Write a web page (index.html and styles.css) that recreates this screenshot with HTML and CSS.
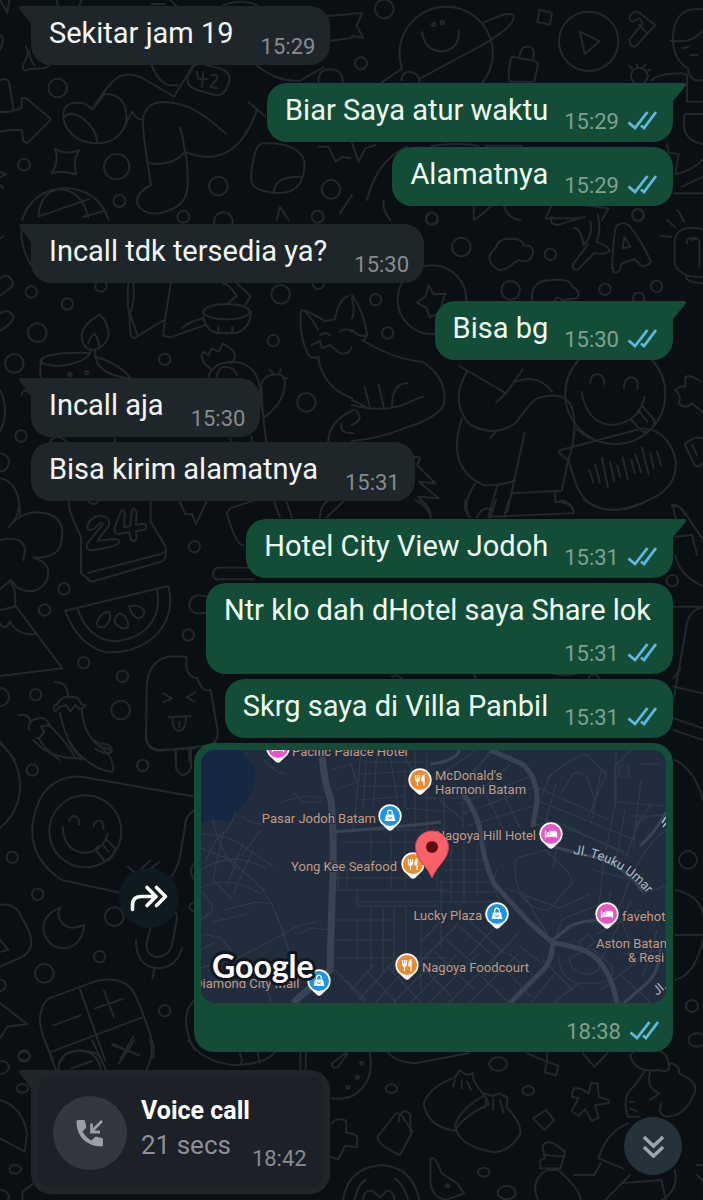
FILE: index.html
```html
<!DOCTYPE html>
<html lang="id">
<head>
<meta charset="utf-8">
<meta name="viewport" content="width=device-width, initial-scale=1">
<title>Chat</title>
<link rel="stylesheet" href="styles.css">
</head>
<body>
<svg width="0" height="0" class="defs" aria-hidden="true">
  <defs>
    <symbol id="ticks" viewBox="0 0 30 20"><path d="M1.500 12.500l6.500 5.500L20.500 2M14 15.500l3 2.500L29 2" fill="none" stroke="#5fb9df" stroke-width="2.800"/></symbol>
    <g id="pin"><path d="M0-11.800a11.800 11.800 0 0 1 6.500 21.600L2 14Q0 15.500-2 14l-4.500-4.200A11.800 11.800 0 0 1 0-11.800z" fill="#fff"/><circle r="10"/></g>
    <g id="food"><use href="#pin" fill="#ec8a33"/><path d="M-4.500-5v4q0 2 2 2v5M-2.500-5v5M-.5-5v4q0 2-2 2M4-5v11M4-5q-2.500 1-2 6h2z" fill="#fff" stroke="#fff" stroke-width="1.200"/></g>
    <g id="shop"><use href="#pin" fill="#1c94e6"/><path d="M-4-1.500h8l1.300 6.500h-10.600z" fill="#fff"/><path d="M-2.300-1.500v-2a2.300 2.300 0 0 1 4.600 0v2" fill="none" stroke="#fff" stroke-width="1.300"/><path d="M-2 1.500q2 2 4 0" fill="none" stroke="#1c94e6"/></g>
    <g id="bed"><use href="#pin" fill="#e855c4"/><path d="M-5.500-3.500v7.500M-5.500 2h11M5.500 4v-4.500q0-2-2-2h-4v4.500" fill="none" stroke="#fff" stroke-width="1.300"/><path d="M-.5-2.500h4q2 0 2 2v2.500h-6z" fill="#fff"/><circle cx="-2.800" cy="-.5" r="1.500" fill="#fff"/></g>
  </defs>
</svg>
<div class="screen">
  <svg class="wallpaper" viewBox="0 0 703 1200" preserveAspectRatio="xMidYMin slice" aria-hidden="true">
    <g transform="scale(.33333)">
      <path d="M0 0L22 38L28 0M170 0l10 48M245 0l-20 48M0 105Q18 110 0 150M78 140q12 25-10 55 0 25 18 12 20 0 40-2 30-5 20-20M88 150q0 30 15 45M0 240q25-8 28 12l12 75M0 335q30 5 65-12v-28q12-5 20 5l64 54q5 8-5 14l-58 58q-10 5-16-5l-4-30q-35-5-66 4"/>
      <path d="M277 328q-20-20-40-20-60-2-44 60 25 60 95 62 65 2 90-60 5-50-15-70-15-18-48-18zM193 350q20-20 55 5 45 35 43 75M277 328q45-75 80-98 40-15 80 10l85 50 60-100M455 196q20 50 52 60l25 0M378 370l18-35q12 25 35 24M428 360q8-50 55-53 40-2 85 15 45 20 108 78M428 360q0 40 25 195-50 25-40 60 30 40 90 18 60-20 60-80 2-60-10-110-5-40-14-60M445 488q65 15 112-32 150 60 215-130M745 306l50 42M770 196q60 50 130 46l70-40M955 246q0-40 35-38 40 0 38 40"/>
      <path d="M580 200q10-12 30-8l55 15q30 12 22 40l-8 20q-12 22-35 18l-60-18q-25-10-22-35zM590 215l5 22 28 0M610 215l-4 45M635 225q20-5 15 15l-20 20 22 5"/>
      <path d="M165 446q30 20 72 5-20 35-8 72-38-12-74-4 24-35 10-73zM66 660q30-90 130-96 100 5 130 96M115 650q5-70 60-82 70 0 90 85M115 650l150-52M250 650l65-18M0 515l18 8-18 8M0 555l10 10"/>
      <path d="M788 430q90-5 120 40 15 30-8 80-25 35-80 28-55-5-65-30-5-30 10-90 8-25 23-28zM822 578q0-50 80-48M955 440l30 0 22 45 20-15 25 5M830 660l10-40 26 40M1020 640l36-55"/>
      <circle cx="173" cy="264" r="28"/><circle cx="72" cy="494" r="18"/><circle cx="350" cy="500" r="38"/><circle cx="358" cy="603" r="18"/><circle cx="655" cy="558" r="28"/><circle cx="993" cy="568" r="28"/><circle cx="550" cy="650" r="18"/><circle cx="670" cy="665" r="28"/><circle cx="953" cy="650" r="18"/><path d="M455 12l40 0M510 0l20 18M670 15q60-20 100 0M985 48l70-6M990 122l66-8"/>
    </g>
    <g transform="translate(352) scale(.33333)">
      <circle cx="97" cy="27" r="28"/><circle cx="27" cy="190" r="18"/><circle cx="710" cy="124" r="89"/><path d="M683 94l60 30-45 38zM150 205a140 140 0 1 1 240 45M210 96q8 58 62 58 52-8 48-62M390 70q85-40 94-24 10 30-95 90L205 235M150 205L85 250M148 240q5-30 30-24 25 5 25 32M0 40l30 0-16 38 20 35-34-6M562 30l38 8-6 36-38-8zM480 170l65 12q15 5 12 15l-10 48h-72q-10-10 0-62zM502 172q5-38 32-32 18 10 8 42M835 45q20-20 35 0l40 30-60 65q-18 0-18-20l40-50-10-15-20 10q-15-5-7-20zM862 75l22 22"/>
      <circle cx="245" cy="73" r="5"/><circle cx="271" cy="68" r="5"/><circle cx="862" cy="228" r="25"/><path d="M840 205l-8-6M855 200v-8M875 200l6-8M888 212l8-4M900 240q20-20 90-20l15 5v80h48M1053 28q-90-10-90 90 0 60 45 88M955 122q70 10 98-32M990 145l20-5M1015 165l20 0M1053 240q-40 10-45-35M1053 342l-55 0q-15 80 55 90M945 430l5 28 30 5-10 60q50-10 83-45M965 580h88M990 560l63-30M0 430l20 55 20-40 30-10M45 600q30-120 120-160M95 600q-5 30 20 60M365 615v45q20-10 55-45M455 615q10 40 50 45M240 437q80-10 140 0M400 437h110M600 615l-20 40h100M690 615l80 10-20 35M975 630q15 15 15 30"/><circle cx="240" cy="657" r="18"/><circle cx="858" cy="645" r="18"/>
    </g>
    <g transform="translate(0 215) scale(.33333)">
      <path d="M65 30q-8 90 60 160M0 70l10-5M0 190q20-18 36 5 8 16-8 26l-28 22M0 295q25-16 40 8 5 18-40 44M385 205q-5 50 3 95l4 60q8 15 18 5l85-52 18-110M400 205q5 60-10 90l22 65M495 313q-5 35-5 50l20 4 110-38M545 340q20-20 65-30M610 290q-2 50 40 64h60q45-20 42-65M670 205q20 5 40 38l-30 25M710 205l42 38-15 25M655 335v15M697 335v15"/><ellipse cx="680" cy="290" rx="69" ry="23"/>
      <path d="M300 298q-60 35-55 72 4 28 28 35h10q40-15 43-45 0-35-26-62zM265 385q5-22 20-28 15 25 12 45M273 405q-10 40-100 48-70-5-45-25 40-18 135-14M128 430q-12 20-5 60M285 405q-5 75 108 85-35-45-108-65"/>
      <circle cx="260" cy="473" r="5"/><circle cx="210" cy="479" r="5"/><circle cx="112" cy="353" r="28"/><circle cx="94" cy="231" r="17"/><circle cx="202" cy="267" r="17"/><circle cx="43" cy="445" r="28"/><circle cx="303" cy="213" r="17"/><circle cx="842" cy="238" r="28"/><circle cx="820" cy="377" r="17"/><circle cx="494" cy="433" r="17"/><circle cx="63" cy="663" r="17"/><circle cx="919" cy="562" r="28"/><circle cx="955" cy="205" r="17"/><circle cx="0" cy="742" r="27"/>
      <path d="M630 460q-35-25-20-50l15 10 10-20 22 10 10-25q60 30 25 60M625 485q15-45 75-45 70 5 80 80M650 485q5-25 20-30M710 480q-5-25-40-25M790 600q-25-90 10-115 50-20 55 15 0 60-60 105M785 520q0 60 14 160M755 665v20M808 465l12 10M842 462l-4 12M862 490l-12 2M925 420q-30-60-22-130 0-15 72 28l30-5q10-60 40-70M915 290q20 20 40 55M960 360q20-10 30 0M1020 350q20-15 35 0M935 390l25-12 5 22 25-10 30 25q30 5 35-20M925 420q20 15 30 5 5 45 30 75 20 30 72 50M985 680q0-60 75-95M1025 625q-10 30 35 30M0 525q30 60 0 125M0 790q60 10 60 110M65 540q5-20 18-10M150 680q20-30 50 0M345 670v10M690 670l10 20"/>
    </g>
    <g transform="translate(352 215) scale(.33333)">
      <circle cx="328" cy="96" r="28"/><circle cx="595" cy="118" r="17"/><circle cx="476" cy="226" r="28"/><circle cx="759" cy="223" r="17"/><circle cx="914" cy="214" r="17"/><circle cx="71" cy="254" r="17"/><circle cx="107" cy="354" r="17"/><circle cx="239" cy="10" r="17"/><circle cx="858" cy="0" r="17"/><circle cx="860" cy="250" r="17"/><circle cx="240" cy="254" r="103"/>
      <path d="M230 210l15 28 35-2-12 35 15 20-25 5-25 10-10-28-28-15 25-18zM440 165q-50-30-10-65 10-30 40-28 40-5 45 20 30-5 28 25-10 30-40 18-15 5-20 12-20 20-43 18zM540 255q-5-60 60-60 60-5 60 20 30 15 15 35l-45 5q-15-15-20 0M665 40q20-5 30 50 30-30 20-70M600 5q-10 25 20 24l80-25M738 0q10 50-5 80 40 15 40 28-20 15-45 5l-50 50q-20 5-15-15l45-60M785 160q-8 15 10 12 12-5 12-25l40-15 20 20q15 5 30-10-25-60-65-110-20-15-38 0-10 20-14 128M812 100l5-35 18 30zM945 15l25 22M985 0l12 20M925 62l32 3M1053 42q-80-15-85 35v70q15 40 85 40M1003 185q-5 15 50 20M1020 75q20-10 22 5v75M1005 85q-5-20 30-15"/>
      <path d="M322 453l140 82 50-72M462 535l-30 28M345 470q-55 90 10 160 80 40 140-10 40-60 60-70 100-30 110 50 10 60-20 150l-15 75M490 500q70-25 110 30M415 668l20-22M330 610q-50 150 65 200 50 5 95-15M518 652l-52 240M480 835l145-8M370 805q-40 60-20 90M435 815l-25 85M610 830v30q50 0 55 30M670 640l45 32M0 630q40-20 10-45M30 375q100 60 180 65 80 50 65 130-20 40-120 70-70 30-155 38M0 345q25 25 45 15-5-60-45-120M45 360l-10 20M0 570q90 25 165-5 40-20 50-20M120 575q0-70 45-70M80 510l15 65M38 515l15 60M0 555l40 20M175 730q20-10 30 0l-10 20 55 55-50-5 60 50-60-5M200 850q40 30 35 50M0 250q10 40 0 60"/>
      <path d="M900 435a150 150 0 1 1-220 0M688 530q20 100 95 100 80-10 95-85M715 505q0-28 22-28 22 5 20 30M816 520q0-34 25-33 20 5 15 35M870 572l38 45q-5 35-35 34l-38-38M858 585l28 35M627 705l245-65q75 5 98 90 10 70-50 110-80 45-150 45-70-10-95-70l-27-80-25-20q-5-8 4-10zM712 765l12 38M730 750l14 55M750 728l18 90M774 740l13 60M795 752l10 33M812 727l15 65M838 735l10 38M850 718l18 55M870 698l20 80M895 715l10 45M915 710l12 40M970 525q15-15 30-10v-30q20-5 45 15M970 525q20 20 10 40 20 20 40 0l33 28M1053 670q-25-10-55 18l30 62q10 10 25-5M1020 690l15 30M960 870q20-5 40 30"/>
    </g>
    <g transform="translate(0 500) scale(.33333)">
      <path d="M55 0q10 40-30 82 50-60 120-40 60 20 35 100-20 35-80 30 60 20 40 70-30 50-90 20-20-30-20-20l-30 25M0 120q70-15 75 30l-5 30M30 245q20 20 15 75l-45 10M45 315l142 190-187 23M0 370q5 15 20 10l10-15q20 40 75 38M208 0q-10 20 35 110v110l20 15q5 12 20 8l200-58q15-5 14-25v-20l-45-75V0M265 218l215-55 15-8"/>
      <path d="M262 85q0-30 35-38 35 0 30 30l-35 45 48-5q20 0 18 12-15 12-80 22-25 0-15-22l45-55q0-15-25 12-20 8-21-1zM362 35q10-12 12 5l-2 42 18-3 5-45q8-15 15 3l-2 37 25-3q12 8 0 18l-25 5 2 20q-5 15-18 5l-4-22-32 5q-15-2-12-18z"/>
      <path d="M195 332l310-74q20 80-30 140-60 65-160 58-80-20-120-124zM232 326q30 90 110 98 80-5 115-60 25-40 14-95M290 370q10-35 38-35 10 25-15 46-18 5-23-11zM345 370q-5-20 15-30 25 10 25 40-15 15-40-10zM388 318q35-5 45 15 0 20-20 22-20-10-25-37zM540 5l15 37h22l10 32 35-74M820 0l20 52M858 0l18 52M730 135q-20 5-50-95l10-15 75-25M960 52q0-40 30-52M980 52l55-52M755 203H655q-20 5-15 25 5 12 20 10h100M620 290q-50-15-52 28 5 28 48 20"/>
      <path d="M560 472q-115-20-120 90l-2 150q5 40 40 40l150-16q30-10 24-50l-20-116q-25 10-40-35-40-5-32-63zM490 580l25 15-25 12M585 578l-25 14 25 12M507 652l65-4M518 655q-2 35 20 38 20-5 20-40M538 665v15M527 752v30M568 752v30M165 547q35-5 40 42M165 635q-10-20 5-20 15-30 45-25 25 0 28 22l15 5q-10 10-20 10l-12-12-15 20-12-20-20 5zM180 640q10 50 35 100l30 40M245 625q5 80 55 115 35 5 33 18-20 5-48-12M58 645q30-5 35 25M88 690q-10-30 30-35 20-5 30 20l-25 5 10 15-15 20-10 0M148 675q60 60 78 100M118 720q20 30 60 60M0 725l45 55"/>
      <circle cx="583" cy="140" r="17"/><circle cx="192" cy="267" r="17"/><circle cx="134" cy="330" r="17"/><circle cx="565" cy="405" r="17"/><circle cx="251" cy="488" r="17"/><circle cx="367" cy="529" r="17"/><circle cx="107" cy="584" r="17"/><circle cx="362" cy="630" r="28"/><circle cx="0" cy="591" r="27"/><circle cx="280" cy="-5" r="17"/>
    </g>
    <g transform="translate(352 500) scale(.33333)">
      <path d="M190 0q40 20 47 55M340 0q-5 40 15 52M375 52q20-40 45-20l-10 20M432 0l-16 52M470 0l-14 52M415 50l250-10q0-30-40-40M695 0q90 60 195 0M960 20q20-10 40 20l50 75M965 20q0 30 8 35M970 110l50-5 15 60M970 165q10 60 85 95M965 320h90M1053 322q-45 10-50 60l-38 215M965 560l88 20M965 655l88 30M965 690l88 30M965 535l20-30M120 530l15-5 15 10M365 520l5 15M600 520q50 10 80 0"/>
      <circle cx="961" cy="242" r="17"/><circle cx="725" cy="540" r="17"/>
    </g>
    <g transform="translate(0 740) scale(.33333)">
      <path d="M0 10q60 50 60 130 0 70-60 125M100 0q50 60 155 55M205 0q50 80 125 95 20 0 0-45l-45-50M290 10q50 0 45 25-10 10-30 2M438 0q10 30 50 30l100-5M528 30v55q20 40 45 0V28M585 170L245 110q-120-5-145 130-20 110 85 180l175 38M585 210q-30 15-30 50l-15 90q-10 50-45 80M207 245q5-20 20-16 12 8 10 25M280 260q5-20 20-18 12 5 10 25M188 262q5 75 70 76 50-5 65-55M320 300l25 25q-5 35-30 38l-30-35 12-10M310 315l15 20M383 380l25 20M410 400l42-40M440 395l38-30"/><circle cx="256" cy="274" r="108"/><path d="M182 502q-60 25-50 75 15 50 65 48 50-10 56-70-50 20-70-10-15-20-1-43zM0 494q50-5 65 40 60 90-5 120L0 680M0 600l25 30-25 5M460 530q20-30 45-30 30 10 25 40l-15 80q-15 35-50 30-30-10-25-40zM408 600q0 80 65 85 55 0 73-60M463 686l-6 30M0 790l82 62-60 8-22 35M125 810q5-30 30-38l130-48q80-20 115 30 30 60 60 160v40M125 810q-20 40 35 150M240 748l75 212M425 833L155 935M160 856l82-30M285 805l83-28M312 752l30 80M338 912l80 35M400 890l-38 65M185 960q10-30 60-28 50 0 60 28M583 780q-50 50 0 150M583 370q-20 20 0 50M583 485q-30 15 0 30"/>
      <circle cx="97" cy="90" r="17"/><circle cx="428" cy="76" r="17"/><circle cx="37" cy="352" r="17"/><circle cx="113" cy="463" r="17"/><circle cx="343" cy="530" r="28"/><circle cx="299" cy="650" r="17"/><circle cx="133" cy="700" r="28"/><circle cx="0" cy="736" r="17"/><circle cx="494" cy="812" r="17"/><circle cx="72" cy="948" r="17"/>
    </g>
    <g transform="translate(0 1040) scale(.44839 .33333)">
      <path d="M100 0l25 92M205 0l32 92M335 0q10 50-10 92M250 15l60 30M300 0l-35 70M130 92q0-60 50-60 40 5 45 60M160 85l45-22M420 0q30 65 100 75 70 0 95-40M535 40l5 20-5 15M575 40l5 30M670 40v50M682 40v50M825 40q10 80-30 120-20 20-55 15M770 40l-30 30q0 20 15 10l20-40M865 38q20 30 60 32l120-30M1175 40l45 25v-25M1220 65l25 12-5 30-25-10zM1300 40l25 40 30-40M0 180q50 20 60 100l-5 55-55-40M50 480v-25l25-25M740 250q10-20 32-8v35q25 5 25 20l-2 25-25-5-15 40-18-5M880 225q5-10 15 0l25 50-28 70q-50-30-50-55zM890 245v-15q12-30 25-5v50"/>
      <path d="M1080 165q-30-45-25-65l-15 5-15-15-10 22q-60 30-70 80 10 70 70 80 15-40 75-80zM1015 120l-5 20M1030 120v25M1042 125l8 25M1080 160l20 8 12-8 20 12-2 30q35 50 30 80-20 50-60 55-80-20-85-80 10-50 65-90zM1085 175l-4 30M1100 178v30M1115 180l8 38M1218 210l18 30-22 30-25-35zM1278 150q5-15 35 10l5-30h15l2 40 22 10v10l-30 5 8 38-15 10-15-35-15 20-15-15 15-38-15-5zM1405 45q35-50 80 0 20 60-15 45-55 10-65-45zM1490 70q25 0 25 30 50 30 30 70-20 60-60 60-20-10-10-40M1450 95q-10 50 20 65l-20 20M1400 160q20-30 40-70M1400 160q-10 30 0 70h25M1415 185h-10M1405 205l15 8M1400 250q-50 30-65 105l55 30M1280 405h45l15-35M1200 480q-20-60 20-90h25q50 60 50 90M1210 320q5-20 25-10l25 25-10 50h-45v-25l10-5zM1215 345l45 5M1350 480l55-75M1385 430l90-10 10 60M1505 390q10 60-30 90M960 355q10-10 25 45l35 30 15 30-40 20q-35-10-35-60v-30zM765 480q10-95 85-105 70 5 85 105M790 480q10-50 25-60M910 480q-10-50-30-65M810 480q0-30 20-28l18 20 15-20q15 0 17 28M1568 375h-15M1555 405l13 20"/>
      <circle cx="54" cy="48" r="13"/><circle cx="50" cy="145" r="13"/><circle cx="34" cy="388" r="13"/><circle cx="0" cy="82" r="20"/><circle cx="1111" cy="72" r="20"/><circle cx="873" cy="146" r="13"/><circle cx="1178" cy="152" r="13"/><circle cx="1079" cy="397" r="13"/><circle cx="1130" cy="458" r="20"/><circle cx="998" cy="437" r="4"/><circle cx="807" cy="70" r="4"/><circle cx="797" cy="112" r="4"/><circle cx="776" cy="142" r="4"/><circle cx="0" cy="470" r="20"/><circle cx="1555" cy="0" r="20"/>
    </g>
    <g transform="translate(670 740)"><path d="M5 20q20 10 28 40M5 150q25 5 28 25M5 195h28M5 240q20-5 28-40"/><circle cx="18" cy="120" r="9"/><circle cx="22" cy="266" r="6"/></g>
  </svg>

  <main class="chat">
    <section class="group in">
      <div class="bubble tail"><p>Sekitar jam 19</p><span class="meta"><time>15:29</time></span></div>
    </section>
    <section class="group out">
      <div class="bubble tail"><p>Biar Saya atur waktu</p><span class="meta"><time>15:29</time><svg class="ticks" role="img" aria-label="Read"><use href="#ticks"/></svg></span></div>
      <div class="bubble"><p>Alamatnya</p><span class="meta"><time>15:29</time><svg class="ticks" role="img" aria-label="Read"><use href="#ticks"/></svg></span></div>
    </section>
    <section class="group in">
      <div class="bubble tail"><p>Incall tdk tersedia ya?</p><span class="meta"><time>15:30</time></span></div>
    </section>
    <section class="group out">
      <div class="bubble tail"><p>Bisa bg</p><span class="meta"><time>15:30</time><svg class="ticks" role="img" aria-label="Read"><use href="#ticks"/></svg></span></div>
    </section>
    <section class="group in">
      <div class="bubble tail"><p>Incall aja</p><span class="meta"><time>15:30</time></span></div>
      <div class="bubble"><p>Bisa kirim alamatnya</p><span class="meta"><time>15:31</time></span></div>
    </section>
    <section class="group out">
      <div class="bubble tail"><p>Hotel City View Jodoh</p><span class="meta"><time>15:31</time><svg class="ticks" role="img" aria-label="Read"><use href="#ticks"/></svg></span></div>
      <div class="bubble stacked"><p>Ntr klo dah dHotel saya Share lok</p><span class="meta"><time>15:31</time><svg class="ticks" role="img" aria-label="Read"><use href="#ticks"/></svg></span></div>
      <div class="bubble"><p>Skrg saya di Villa Panbil</p><span class="meta"><time>15:31</time><svg class="ticks" role="img" aria-label="Read"><use href="#ticks"/></svg></span></div>
      <div class="location">
        <button class="forward" type="button" aria-label="Forward">
          <svg viewBox="0 0 60 60" fill="none" stroke="#fff" stroke-width="3.600" stroke-linecap="round" stroke-linejoin="round"><path d="M13.500 41.500v-4.500q0-8.500 8.500-8.500h14M28 19.500l9 9-9 9M37.500 19.500l9 9-9 9"/></svg>
        </button>
        <div class="bubble media">
          <svg class="map" viewBox="0 0 465 253" role="img" aria-label="Map">
            <rect width="465" height="253" fill="#212d3c"/>
            <path d="M0 0h40q8 12 14 19 3 22-16 41l-9 11-15-2-14 5z" fill="#152742"/>
            <g fill="none" stroke="#303c4b" stroke-width="1.200">
              <path d="M64 10q8 12 20 14M80 52l24-6 18 2M92 42l10 10 20 0M0 84q25 0 42 12t30 20M12 70q6 30 24 50M35 62q-6 18-20 28L4 112M0 120q30-20 64-2M22 82L12 130l20 20M0 138q28-14 60 6M42 92l-16 44M52 100l-20 44M0 98l30 12 35 32M40 66q10 8 20 8M60 80l-20 26M0 142q10 8 12 18L0 170M22 160l34-8 15 2M12 172l34-8M0 184l20 4 10 12M71 154l-10-14M71 154l12 30q12-10 34-12M83 184l14 54M83 184l-50 26M97 184l14-6 18 2M60 220l10 33M25 210l-25 8M0 200l14-8"/>
              <path d="M130 20l20-6 6 18-22 8M144 80h100M141 92h95M132 112h80M160 0l-5 56q0 24-8 26M166 0l-4 60M176 0l-4 60M188 0l10 60M200 0l24 44M162 12h60M160 24l70-4M158 36h50M158 50l46-4M204 20v38M214 0v80M226 0v82M204 58l46 4M218 48h50M170 82v30M190 84v56M204 82v58M130 128h90M137 115v25M146 115v25M130 140h115M156 140v16h80M156 152h80M170 157v60M182 157v65M193 157v68M137 170h56M137 190h56M156 170v38M137 208h110M205 157v60M220 170v70M240 130v70M240 110h48M240 120h44M240 132h50M240 142h56M240 152h58M250 95v55M263 90v62M276 95v50M232 90h40M236 85v55M243 40v40M262 46v32M216 215l42-42M250 160l-30 32M258 176l34 30M246 190l40 36M234 202l40 38M222 218l28 28M130 215l34 38M150 240l24-26M158 250l36-40M174 253l36-40M192 253l40-40M210 253l45-48M228 253l50-50M248 253l60-60M268 253l50-50M145 230l20 20M165 220l30 32M186 215l34 38"/>
              <path d="M229 30q30-18 46-30M246 20l20 10 24-30M262 30l30-28M280 40l30-26M258 54l72-28M262 64l74-28M266 76l66-20M285 44l20 40M300 38l20 42M238 50l24 20M272 20l30 20M332 77q20-10 40 2l58 28M336 66l88 36M340 52l94 38M338 38l70 32M345 30q20-20 40-26l20 20-18 44M360 44l12-20q8-4 14 4l8 22M350 24l-20 48M355 34l-12 44M400 20l-10 54M415 0v50l-10 50M430 0l-16 16v36l50 4M440 14h20M418 16h10v10h-10zM440 30l-8 70M424 60l-10 56M432 66h33M450 56q-12 10-26 54M434 76q10-14 30-10M465 80q-30 20-50 90M315 108l30-8 22 22 5 10-24 28q-20 0-30-18-6-20-3-34zM356 96l-4 22M403 106l-6 60M392 120l40 10M440 145l25-10v60M296 120q-8 20 4 30"/>
              <path d="M309 140l50 18 30-14M352 193l10-24 40-16M362 183l22-12 24 4M358 207q0 20 18 26h24q16-4 10-18l-18-16-30-2M368 208q2 14 16 16 18 0 14-14l-16-8zM378 192l10-8 6 8-10 8zM320 140l26 44M410 140q-6 20 10 30l10 24M430 150l-30 60M440 160l-44 24M456 180q-6 24-14 46M400 240l40-32M372 240l-30-30M352 253l26-20M330 253l24-30M300 215l30 32M280 226l28 27M318 196l24 18M308 203l24 22M268 170l36 34M298 172l-30 34M318 182l-30 34M420 225l30 28M465 200l-45 4"/>
            </g>
            <g fill="none" stroke="#384453" stroke-linejoin="round">
              <path d="M121 0q1 30 9 50 4 40 1 100l-2 70-37 33" stroke-width="7"/>
              <path d="M289 0l32 14q15 12 15 36l-4 27M262 43q14 20 17 37 3 30 14 54l36 39 23 20q30 4 42 14 16 14 22 46M352 193q-2 20-10 27l-33 33" stroke-width="5"/>
              <path d="M229 14q24-2 30-14M130 82q60-4 110-10M352 190l17-14q12-6 36-6M465 62q-10 20-26 34M350 96l30 8q40 6 62 38M459 190q2 30-14 44l-22 19" stroke-width="3"/>
            </g>
            <g class="places">
              <text x="91" y="6">Pacific Palace Hotel</text>
              <text x="234" y="30">McDonald's</text><text x="234" y="44">Harmoni Batam</text>
              <text x="175" y="73" text-anchor="end">Pasar Jodoh Batam</text>
              <text x="196" y="121" text-anchor="end">Yong Kee Seafood</text>
              <text x="335" y="90" text-anchor="end">Nagoya Hill Hotel</text>
              <text x="281" y="170" text-anchor="end">Lucky Plaza</text>
              <text x="221" y="222">Nagoya Foodcourt</text>
              <text x="421" y="171">favehotel</text>
              <text x="395" y="198">Aston Batam</text><text x="427" y="212">&amp; Resi</text>
              <text x="-7" y="238">Diamond City Mall</text>
            </g>
            <path id="road" d="M372 104Q420 110 448 146" fill="none"/>
            <text class="road"><textPath href="#road">Jl. Teuku Umar</textPath></text>
            <path d="M461 73l4-6M462 77l3-4" stroke="#b4bccb" stroke-width="1.500"/>
            <text class="road" transform="translate(456 246) rotate(-40)">Jl.</text>
            <use href="#bed" x="77" y="-2"/><use href="#food" x="219" y="30"/><use href="#shop" x="189" y="66"/><use href="#food" x="212" y="114"/><use href="#bed" x="350" y="84"/><use href="#shop" x="296" y="164"/><use href="#bed" x="406" y="164"/><use href="#food" x="206" y="215"/><use href="#shop" x="118" y="231"/>
            <path d="M231 81c10 0 16.500 7.500 16.500 16 0 12-11 18-16.500 31-5.500-13-16.500-19-16.500-31 0-8.500 6.500-16 16.500-16z" fill="#f8616a" stroke="#c8444f"/><circle cx="231" cy="97" r="6" fill="#600d12"/>
            <text class="google" x="11" y="228">Google</text>
          </svg>
          <span class="meta"><time>18:38</time><svg class="ticks" role="img" aria-label="Read"><use href="#ticks"/></svg></span>
        </div>
      </div>
    </section>
    <section class="group in">
      <div class="bubble tail call">
        <button class="call-card" type="button">
          <span class="call-icon"><svg viewBox="0 0 32 32" aria-hidden="true"><path d="M2.500 4.500Q2.500 3 4 3h5.500q1.200 0 1.500 1.200l1.200 5.300q.2 1-.5 1.700L8.500 14.500q3.200 6 9 9l3.200-3.300q.7-.7 1.700-.5l5.400 1.200q1.200.3 1.200 1.600V28q0 1.500-1.500 1.500Q16 29 9.200 22.500 2.500 15.500 2.500 4.500z" fill="#9a9ea6"/><path d="M28 4L17.500 14.500M17.500 6.500v8.500h8.500" fill="none" stroke="#9a9ea6" stroke-width="2.800"/></svg></span>
          <span class="call-text"><strong>Voice call</strong><span>21 secs</span></span>
          <time>18:42</time>
        </button>
      </div>
    </section>
  </main>
  <button class="to-end" type="button" aria-label="Scroll to latest"><svg viewBox="0 0 24 24" fill="none" stroke="#99a6ae" stroke-width="3.600"><path d="M2 2l10 9.500L22 2M2 12.500L12 22l10-9.500"/></svg></button>
</div>
</body>
</html>
```
FILE: styles.css
```css
* { box-sizing: border-box; }

body {
  margin: 0;
  background: #0a0f13;
  font-family: Roboto, "Liberation Sans", sans-serif;
}

button {
  border: 0;
  padding: 0;
  font: inherit;
  color: inherit;
  cursor: pointer;
}

p { margin: 0; }

.defs { position: absolute; }

.screen {
  position: relative;
  min-height: 100vh;
  overflow: hidden;
}

.wallpaper {
  position: absolute;
  inset: 0;
  width: 100%;
  height: 100%;
  fill: none;
  stroke: #22272b;
  stroke-linecap: round;
  stroke-linejoin: round;
}

.wallpaper * {
  stroke-width: 2px;
  vector-effect: non-scaling-stroke;
}

.chat {
  position: relative;
  display: flex;
  flex-direction: column;
  gap: 18px;
  padding: 6px 30px 4px 31px;
}

.group {
  display: flex;
  flex-direction: column;
  gap: 5px;
}

.in { align-items: flex-start; }
.out { align-items: flex-end; }

.bubble {
  position: relative;
  display: flex;
  align-items: flex-end;
  border-radius: 20px;
}

.in .bubble {
  gap: 27px;
  padding: 10px 15px 5px 18px;
  background: #1f2629;
  color: #f3f6f8;
}

.out .bubble {
  gap: 16px;
  padding: 10px 16px 7px 18px;
  background: #144d37;
  color: #edfdf3;
}

.bubble p {
  font-size: 29px;
  line-height: 34px;
}

.in p { padding-bottom: 10px; }
.out p { padding-bottom: 8px; }

.meta {
  display: flex;
  align-items: flex-start;
  gap: 8px;
  line-height: 26px;
}

time {
  font-size: 22px;
  line-height: 26px;
  color: #858b8f;
}

.out time { color: #7fa08f; }

.ticks {
  width: 30px;
  height: 22px;
}

.tail::before {
  content: "";
  position: absolute;
  top: 0;
  width: 14px;
  height: 18px;
  background: inherit;
}

.in .tail { border-top-left-radius: 0; }
.out .tail { border-top-right-radius: 0; }

.in .tail::before {
  left: -12px;
  clip-path: polygon(10% 0, 100% 0, 100% 100%, 86% 100%, 3% 16%, 0 6%);
}

.out .tail::before {
  right: -13px;
  clip-path: polygon(0 0, 90% 0, 100% 6%, 97% 16%, 7% 100%, 0 100%);
}

.out .stacked {
  flex-direction: column;
  gap: 6px;
}

.stacked p { padding-right: 6px; }

.location {
  display: flex;
  align-items: center;
  justify-content: flex-end;
  gap: 15px;
  width: 100%;
}

.forward {
  flex: none;
  width: 60px;
  height: 60px;
  border-radius: 50%;
  background: #0e1920;
}

.forward svg { display: block; }

.out .media {
  flex-direction: column;
  gap: 16px;
  width: 100%;
  max-width: 479px;
  padding: 7px;
}

.map {
  display: block;
  width: 100%;
  border-radius: 14px;
}

.media .meta { padding-right: 7px; }

.places {
  font-size: 13px;
  fill: #c19a86;
  stroke: #212d3c;
  stroke-width: 2px;
  paint-order: stroke;
}

.road {
  font-size: 13px;
  fill: #aeb7c5;
}

.google {
  font-family: Lato, sans-serif;
  font-size: 32px;
  font-weight: 700;
  fill: #fff;
  stroke: #11161d;
  stroke-width: 6px;
  stroke-linejoin: round;
  paint-order: stroke;
}

.in .call { padding: 6px; }

.call-card {
  display: flex;
  align-items: flex-end;
  gap: 14px;
  padding: 17px 17px 16px 16px;
  border-radius: 16px;
  background: #1c2027;
  text-align: left;
}

.call-icon {
  display: grid;
  place-items: center;
  width: 74px;
  height: 74px;
  margin: 3px 0 2px;
  border-radius: 50%;
  background: #33373f;
}

.call-icon svg {
  width: 32px;
  height: 32px;
}

.call-text {
  display: flex;
  flex-direction: column;
  align-self: flex-start;
  font-size: 26px;
  line-height: 35px;
  color: #8b9097;
}

.call-text strong {
  font-size: 25px;
  color: #fff;
}

.call-card time { margin-left: -12px; }

.to-end {
  position: absolute;
  right: 21px;
  bottom: 25px;
  display: grid;
  place-items: center;
  width: 58px;
  height: 58px;
  border-radius: 50%;
  background: #25323a;
}

.to-end svg {
  width: 23px;
  height: 23px;
}
```
